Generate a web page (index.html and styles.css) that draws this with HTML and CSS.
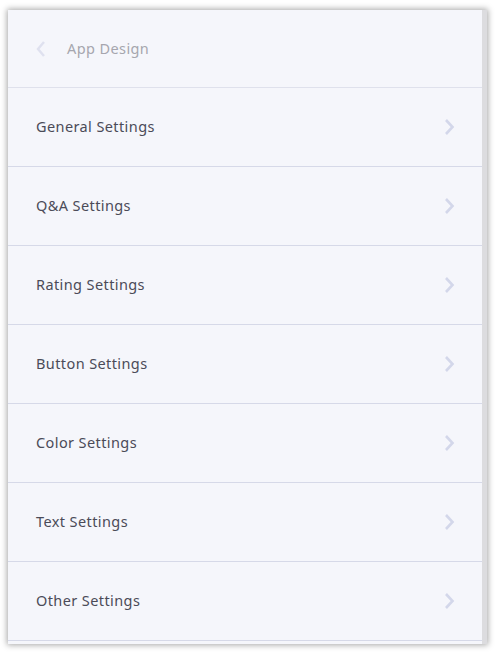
FILE: index.html
```html
<!DOCTYPE html>
<html>
<head>
<meta charset="utf-8">
<link rel="stylesheet" href="styles.css">
</head>
<body>
<div class="panel">
  <div class="content">
    <div class="header">
      <svg class="back" width="12" height="18" viewBox="0 0 12 18"><path d="M9 2 L3 9 L9 16" fill="none" stroke="#dfe1ef" stroke-width="2.4"/></svg>
      <span class="title">App Design</span>
    </div>
    <div class="row"><span class="label">General Settings</span><svg class="chev" width="14" height="18" viewBox="0 0 14 18"><path d="M4 2 L10.5 9 L4 16" fill="none" stroke="#d3d7ea" stroke-width="2.6"/></svg></div>
    <div class="row"><span class="label">Q&amp;A Settings</span><svg class="chev" width="14" height="18" viewBox="0 0 14 18"><path d="M4 2 L10.5 9 L4 16" fill="none" stroke="#d3d7ea" stroke-width="2.6"/></svg></div>
    <div class="row"><span class="label">Rating Settings</span><svg class="chev" width="14" height="18" viewBox="0 0 14 18"><path d="M4 2 L10.5 9 L4 16" fill="none" stroke="#d3d7ea" stroke-width="2.6"/></svg></div>
    <div class="row"><span class="label">Button Settings</span><svg class="chev" width="14" height="18" viewBox="0 0 14 18"><path d="M4 2 L10.5 9 L4 16" fill="none" stroke="#d3d7ea" stroke-width="2.6"/></svg></div>
    <div class="row"><span class="label">Color Settings</span><svg class="chev" width="14" height="18" viewBox="0 0 14 18"><path d="M4 2 L10.5 9 L4 16" fill="none" stroke="#d3d7ea" stroke-width="2.6"/></svg></div>
    <div class="row"><span class="label">Text Settings</span><svg class="chev" width="14" height="18" viewBox="0 0 14 18"><path d="M4 2 L10.5 9 L4 16" fill="none" stroke="#d3d7ea" stroke-width="2.6"/></svg></div>
    <div class="row"><span class="label">Other Settings</span><svg class="chev" width="14" height="18" viewBox="0 0 14 18"><path d="M4 2 L10.5 9 L4 16" fill="none" stroke="#d3d7ea" stroke-width="2.6"/></svg></div>
  </div>
  <div class="track"></div>
</div>
</body>
</html>
```
FILE: styles.css
```css
html, body {
  margin: 0;
  padding: 0;
  background: #ffffff;
}
body {
  font-family: "Noto Sans", "Open Sans", sans-serif;
  padding: 10px 9px 9px 8px;
}
.panel {
  display: flex;
  width: 479px;
  height: 634px;
  background: #f5f6fb;
  box-shadow: 0 0 6px 1px rgba(0, 0, 0, 0.35);
  overflow: hidden;
}
.content {
  flex: 1;
  display: flex;
  flex-direction: column;
}
.track {
  width: 5px;
  background: #dcdcdf;
}
.header {
  height: 78px;
  display: flex;
  align-items: center;
  padding-left: 27px;
  border-bottom: 1px solid #dfe1ec;
  box-sizing: border-box;
  flex-shrink: 0;
}
.back {
  margin-right: 20px;
}
.title {
  color: #a6a6ae;
  font-size: 14.5px;
  letter-spacing: 0.4px;
  margin-bottom: 2px;
}
.row {
  height: 79px;
  flex-shrink: 0;
  display: flex;
  align-items: center;
  justify-content: space-between;
  padding: 0 26px 0 28px;
  border-bottom: 1px solid #d6d9e8;
  box-sizing: border-box;
  color: #4b4b58;
  font-size: 14.5px;
  letter-spacing: 0.4px;
}
.label {
  margin-bottom: 2px;
}
```
